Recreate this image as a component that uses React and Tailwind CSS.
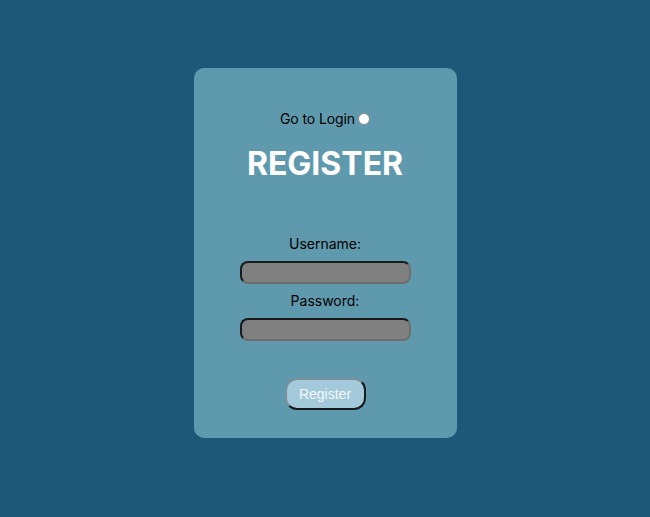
export default function App() {
  return (
    <div className="min-h-[517px] w-full bg-[#1f5778] flex justify-center pt-[68px] font-['Inter',sans-serif]">
      <div className="w-[263px] h-[370px] bg-[#5f99ad] rounded-[10px] flex flex-col items-center">
        <label className="mt-[41px] flex items-center text-[14px] leading-[20px] text-black tracking-[-0.1px]">
          Go to Login
          <span className="ml-[3px] w-[12px] h-[12px] rounded-full bg-white border border-[#8a8a8a]"></span>
        </label>
        <h1 className="mt-[16px] text-[32px] leading-[38px] font-bold text-white">REGISTER</h1>
        <form className="mt-[50px] flex flex-col items-center">
          <label className="text-[14px] leading-[22px] text-black">Username:</label>
          <input
            type="text"
            className="mt-[6px] w-[171px] h-[23px] rounded-[8px] bg-[#808080] border-2 border-t-[#1a1a1a] border-l-[#1a1a1a] border-r-[#6e6e6e] border-b-[#6e6e6e] outline-none"
          />
          <label className="mt-[6px] text-[14px] leading-[22px] text-black">Password:</label>
          <input
            type="password"
            className="mt-[6px] w-[171px] h-[23px] rounded-[8px] bg-[#808080] border-2 border-t-[#1a1a1a] border-l-[#1a1a1a] border-r-[#6e6e6e] border-b-[#6e6e6e] outline-none"
          />
          <button
            type="button"
            className="mt-[37px] w-[81px] h-[32px] rounded-[12px] bg-[#a2cadb] text-[#f4f8fa] text-[14px] font-['Liberation_Sans',sans-serif] border-2 border-t-[#7a8f98] border-l-[#7a8f98] border-r-[#1a1a1a] border-b-[#1a1a1a]"
          >
            Register
          </button>
        </form>
      </div>
    </div>
  );
}
